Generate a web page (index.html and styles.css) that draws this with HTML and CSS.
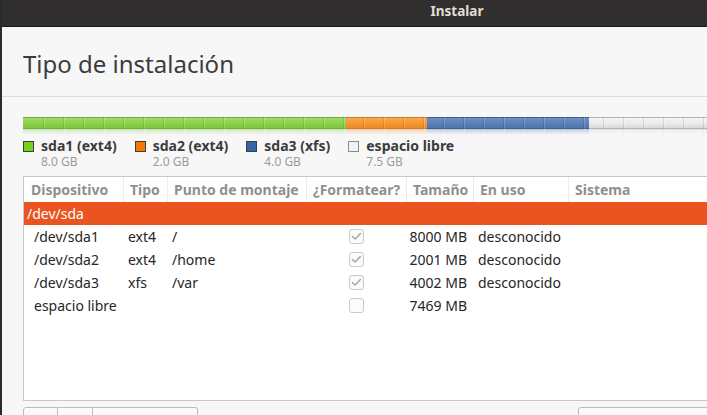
FILE: index.html
```html
<!DOCTYPE html>
<html lang="es">
<head>
<meta charset="utf-8">
<title>Instalar</title>
<link rel="stylesheet" href="styles.css">
</head>
<body>
<div class="window">
  <div class="titlebar"><span class="wintitle">Instalar</span></div>
  <div class="page-head"><h1>Tipo de instalación</h1></div>
  <div class="content">
    <div class="diskbar">
      <div class="seg seg-green" style="width:323px"></div>
      <div class="seg seg-orange" style="width:81px"></div>
      <div class="seg seg-blue" style="width:162px"></div>
      <div class="seg seg-free" style="width:302px"></div>
    </div>
    <div class="legend">
      <div class="legend-item">
        <span class="swatch sw-green"></span>
        <div class="legend-text"><div class="legend-label">sda1 (ext4)</div><div class="legend-size">8.0 GB</div></div>
      </div>
      <div class="legend-item">
        <span class="swatch sw-orange"></span>
        <div class="legend-text"><div class="legend-label">sda2 (ext4)</div><div class="legend-size">2.0 GB</div></div>
      </div>
      <div class="legend-item">
        <span class="swatch sw-blue"></span>
        <div class="legend-text"><div class="legend-label">sda3 (xfs)</div><div class="legend-size">4.0 GB</div></div>
      </div>
      <div class="legend-item">
        <span class="swatch sw-free"></span>
        <div class="legend-text"><div class="legend-label">espacio libre</div><div class="legend-size">7.5 GB</div></div>
      </div>
    </div>
    <div class="table">
      <div class="row head">
        <div>Dispositivo</div>
        <div>Tipo</div>
        <div>Punto de montaje</div>
        <div>¿Formatear?</div>
        <div>Tamaño</div>
        <div>En uso</div>
        <div>Sistema</div>
      </div>
      <div class="disk-row">/dev/sda</div>
      <div class="row">
        <div class="c-dev">/dev/sda1</div>
        <div class="c-type">ext4</div>
        <div class="c-mount">/</div>
        <div class="c-fmt"><span class="check"><svg viewBox="0 0 15 15" width="15" height="15"><path d="M3.3 7.4 L6.2 10.1 L11.4 4.6" fill="none" stroke="#a3a3a3" stroke-width="1.4" stroke-linecap="round" stroke-linejoin="round"/></svg></span></div>
        <div class="c-size">8000 MB</div>
        <div class="c-use">desconocido</div>
        <div></div>
      </div>
      <div class="row">
        <div class="c-dev">/dev/sda2</div>
        <div class="c-type">ext4</div>
        <div class="c-mount">/home</div>
        <div class="c-fmt"><span class="check"><svg viewBox="0 0 15 15" width="15" height="15"><path d="M3.3 7.4 L6.2 10.1 L11.4 4.6" fill="none" stroke="#a3a3a3" stroke-width="1.4" stroke-linecap="round" stroke-linejoin="round"/></svg></span></div>
        <div class="c-size">2001 MB</div>
        <div class="c-use">desconocido</div>
        <div></div>
      </div>
      <div class="row">
        <div class="c-dev">/dev/sda3</div>
        <div class="c-type">xfs</div>
        <div class="c-mount">/var</div>
        <div class="c-fmt"><span class="check"><svg viewBox="0 0 15 15" width="15" height="15"><path d="M3.3 7.4 L6.2 10.1 L11.4 4.6" fill="none" stroke="#a3a3a3" stroke-width="1.4" stroke-linecap="round" stroke-linejoin="round"/></svg></span></div>
        <div class="c-size">4002 MB</div>
        <div class="c-use">desconocido</div>
        <div></div>
      </div>
      <div class="row">
        <div class="c-dev">espacio libre</div>
        <div class="c-type"></div>
        <div class="c-mount"></div>
        <div class="c-fmt"><span class="check"></span></div>
        <div class="c-size">7469 MB</div>
        <div class="c-use"></div>
        <div></div>
      </div>
    </div>
    <div class="buttons">
      <div class="btn-group">
        <span class="btn btn-add" aria-label="Añadir"></span>
        <span class="btn btn-del" aria-label="Quitar"></span>
        <span class="btn btn-change" aria-label="Cambiar"></span>
      </div>
      <span class="btn btn-new" aria-label="Nueva tabla de particiones"></span>
    </div>
  </div>
</div>
</body>
</html>
```
FILE: styles.css
```css
html, body {
  margin: 0;
  padding: 0;
}

body {
  width: 707px;
  height: 415px;
  overflow: hidden;
  background: #f7f7f7;
  font-family: "Noto Sans", "DejaVu Sans", sans-serif;
  color: #333333;
}

.window {
  width: 912px;
  height: 415px;
  box-sizing: border-box;
  border-left: 2px solid #2c2b2b;
  background: #f7f7f7;
  display: flex;
  flex-direction: column;
}

.window > * {
  flex: none;
}

.titlebar {
  height: 27px;
  box-sizing: border-box;
  background: #302e2e;
  border-bottom: 1px solid #1b1a1a;
  display: flex;
  align-items: center;
  justify-content: center;
  padding-bottom: 4px;
}

.wintitle {
  color: #e0ddd6;
  font-weight: 700;
  font-size: 13.5px;
  line-height: 16px;
}

.page-head {
  padding: 21px 21px 16px;
  border-bottom: 1px solid #dcdcdc;
}

.page-head h1 {
  margin: 0;
  font-weight: 400;
  font-size: 24px;
  line-height: 32px;
  color: #3c3c3c;
}

.content {
  padding: 20px 21px 0;
  display: flex;
  flex-direction: column;
}

.content > * {
  flex: none;
}

/* partition bar */
.diskbar {
  position: relative;
  display: flex;
  height: 12px;
  -webkit-box-reflect: below 0 linear-gradient(transparent 50%, rgba(0, 0, 0, 0.32));
}

.diskbar::after {
  content: "";
  position: absolute;
  top: 0;
  bottom: 0;
  left: 20px;
  right: 0;
  background: repeating-linear-gradient(90deg,
    rgba(0, 0, 0, 0.10) 0 1px,
    rgba(255, 255, 255, 0.18) 1px 2px,
    transparent 2px 20px);
}

.seg {
  height: 12px;
  box-sizing: border-box;
  border-top: 1px solid;
  border-bottom: 1px solid;
  flex: none;
}

.seg-green {
  background: linear-gradient(#9edd62, #8cd04b 60%, #7fc43c);
  border-color: #6fb135 #4f8c22;
}

.seg-orange {
  background: linear-gradient(#f8a84e, #f39632 60%, #ec8a25);
  border-color: #d27a1e #b0621a;
}

.seg-blue {
  background: linear-gradient(#6c8fc3, #5a7fb6 60%, #4e72a8);
  border-color: #3d5f91 #2f4d7b;
}

.seg-free {
  background: linear-gradient(#f4f4f4, #ebebeb 55%, #d9d9d9);
  border-color: #b4b4b4 #9a9a9a;
}

/* legend */
.legend {
  display: flex;
  gap: 18px;
  margin-top: 8px;
  height: 31px;
}

.legend-item {
  display: flex;
  align-items: flex-start;
}

.swatch {
  width: 11px;
  height: 11px;
  box-sizing: border-box;
  border: 1px solid #3e3e3e;
  margin-top: 4px;
  margin-right: 7px;
  flex: none;
}

.sw-green { background: #73d216; }
.sw-orange { background: #f57900; }
.sw-blue { background: #3465a4; }
.sw-free { background: #f2f2f2; border-color: #8c8c8c; }

.legend-label {
  font-weight: 700;
  font-size: 14px;
  line-height: 18px;
  color: #3c3c3c;
  white-space: nowrap;
}

.legend-size {
  font-size: 12px;
  line-height: 13px;
  color: #9b9b9b;
}

/* table */
.table {
  margin-top: 8px;
  height: 225px;
  box-sizing: border-box;
  border: 1px solid #c8c8c8;
  background: #ffffff;
}

.row {
  display: grid;
  grid-template-columns: 99px 44px 139px 100px 67px 95px 1fr;
  height: 23px;
  line-height: 23px;
  font-size: 14px;
  color: #262626;
  white-space: nowrap;
}

.row > div {
  overflow: hidden;
}

.head {
  height: 25px;
  line-height: 25px;
  font-weight: 700;
  color: #8f8f8f;
}

.head > div:first-child {
  padding-left: 7px;
}

.head > div + div {
  border-left: 1px solid #ececec;
  padding-left: 6px;
}

.disk-row {
  height: 23px;
  line-height: 23px;
  font-size: 14px;
  background: #e95420;
  color: #ffffff;
  padding-left: 3px;
}

.c-dev { padding-left: 10px; }
.c-type { padding-left: 5px; }
.c-mount { padding-left: 5px; }
.c-use { padding-left: 5px; }

.c-size {
  text-align: right;
  padding-right: 6px;
}

.c-fmt {
  display: flex;
  align-items: center;
  justify-content: center;
}

.check {
  width: 15px;
  height: 15px;
  box-sizing: border-box;
  border: 1px solid #cacaca;
  border-radius: 3px;
  background: #fbfbfb;
  display: flex;
  align-items: center;
  justify-content: center;
  overflow: hidden;
}

.check svg {
  display: block;
  flex: none;
}

/* bottom buttons */
.buttons {
  margin-top: 6px;
  display: flex;
  justify-content: space-between;
}

.btn-group {
  display: flex;
}

.btn {
  display: block;
  height: 30px;
  box-sizing: border-box;
  border: 1px solid #bdbdbd;
  background: linear-gradient(#fbfbfb, #f1f1f1);
}

.btn-add {
  width: 35px;
  border-radius: 3px 0 0 0;
}

.btn-del {
  width: 35px;
  border-left: none;
}

.btn-change {
  width: 105px;
  border-left: none;
  border-radius: 0 3px 0 0;
}

.btn-new {
  width: 313px;
  border-radius: 3px 3px 0 0;
}
```
